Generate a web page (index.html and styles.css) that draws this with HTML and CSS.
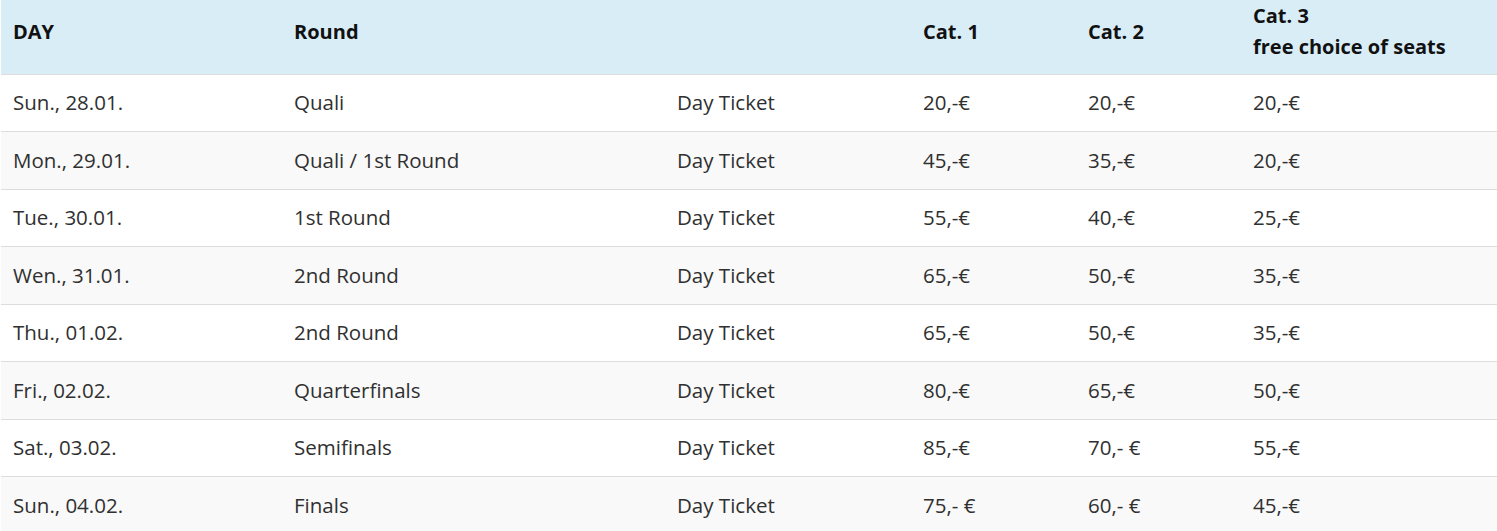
FILE: index.html
```html
<!DOCTYPE html>
<html lang="en">
<head>
<meta charset="utf-8">
<title>Ticket prices</title>
<link rel="stylesheet" href="styles.css">
</head>
<body>
<table class="prices">
  <colgroup>
    <col class="c-day">
    <col class="c-round">
    <col class="c-type">
    <col class="c-cat1">
    <col class="c-cat2">
    <col class="c-cat3">
  </colgroup>
  <thead>
    <tr>
      <th>DAY</th>
      <th>Round</th>
      <th></th>
      <th>Cat. 1</th>
      <th>Cat. 2</th>
      <th>Cat. 3<br>free choice of seats</th>
    </tr>
  </thead>
  <tbody>
    <tr><td>Sun., 28.01.</td><td>Quali</td><td>Day Ticket</td><td>20,-€</td><td>20,-€</td><td>20,-€</td></tr>
    <tr><td>Mon., 29.01.</td><td>Quali / 1st Round</td><td>Day Ticket</td><td>45,-€</td><td>35,-€</td><td>20,-€</td></tr>
    <tr><td>Tue., 30.01.</td><td>1st Round</td><td>Day Ticket</td><td>55,-€</td><td>40,-€</td><td>25,-€</td></tr>
    <tr><td>Wen., 31.01.</td><td>2nd Round</td><td>Day Ticket</td><td>65,-€</td><td>50,-€</td><td>35,-€</td></tr>
    <tr><td>Thu., 01.02.</td><td>2nd Round</td><td>Day Ticket</td><td>65,-€</td><td>50,-€</td><td>35,-€</td></tr>
    <tr><td>Fri., 02.02.</td><td>Quarterfinals</td><td>Day Ticket</td><td>80,-€</td><td>65,-€</td><td>50,-€</td></tr>
    <tr><td>Sat., 03.02.</td><td>Semifinals</td><td>Day Ticket</td><td>85,-€</td><td>70,- €</td><td>55,-€</td></tr>
    <tr><td>Sun., 04.02.</td><td>Finals</td><td>Day Ticket</td><td>75,- €</td><td>60,- €</td><td>45,-€</td></tr>
  </tbody>
</table>
</body>
</html>
```
FILE: styles.css
```css
html, body {
  margin: 0;
  padding: 0;
  background: #ffffff;
}

body {
  padding-left: 1px;
  font-family: "Open Sans", "Noto Sans", sans-serif;
  font-size: 20.5px;
  color: #303030;
}

.prices {
  width: 1496px;
  table-layout: fixed;
  border-collapse: separate;
  border-spacing: 0;
}

.c-day { width: 281px; }
.c-round { width: 383px; }
.c-type { width: 246px; }
.c-cat1 { width: 165px; }
.c-cat2 { width: 165px; }
.c-cat3 { width: 256px; }

.prices th {
  background: #d9edf7;
  color: #111111;
  font-size: 20px;
  font-weight: 700;
  text-align: left;
  vertical-align: middle;
  line-height: 31px;
  padding: 0 12px 11.5px;
  border-bottom: 1px solid #dddddd;
}

.prices td {
  line-height: 31px;
  padding: 12.75px 12px;
  border-bottom: 1px solid #dddddd;
  vertical-align: middle;
  white-space: nowrap;
}

.prices tbody tr:nth-child(even) td {
  background: #f9f9f9;
}
```
